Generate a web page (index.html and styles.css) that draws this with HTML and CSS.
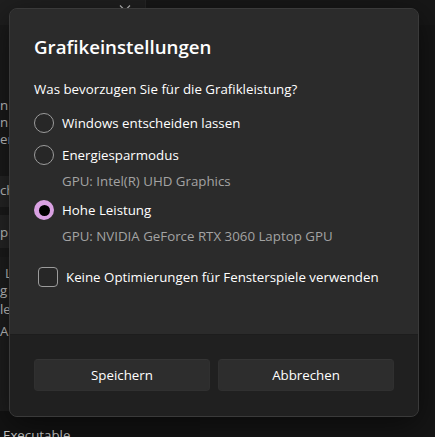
FILE: index.html
```html
<!DOCTYPE html>
<html lang="de">
<head>
<meta charset="utf-8">
<title>Grafikeinstellungen</title>
<link rel="stylesheet" href="styles.css">
</head>
<body>
<div class="bg">
  <div class="top-row">
    <div class="top-card">
      <svg class="chev" width="12" height="8" viewBox="0 0 12 8"><path d="M1 1.5 L6 6.5 L11 1.5" fill="none" stroke="#bdbdbd" stroke-width="1.2"/></svg>
    </div>
    <div class="top-rest"></div>
  </div>
  <div class="side">
    <div class="blk blk1">
      <div class="frag">n</div>
      <div class="frag">n</div>
      <div class="frag">er</div>
    </div>
    <div class="blk blk2"><div class="frag">ch</div></div>
    <div class="blk blk3"><div class="frag">pp</div></div>
    <div class="blk blk4">
      <div class="frag f4">L</div>
      <div class="frag">g</div>
      <div class="frag f6">le</div>
      <div class="frag f7">A</div>
    </div>
    <div class="blk blk5"><div class="exe">Executable</div></div>
  </div>

  <div class="dialog">
    <div class="content">
      <h1 class="title">Grafikeinstellungen</h1>
      <p class="question">Was bevorzugen Sie für die Grafikleistung?</p>
      <div class="options">
        <div class="radio-row"><span class="radio"></span><span class="label">Windows entscheiden lassen</span></div>
        <div class="radio-row"><span class="radio"></span><span class="label">Energiesparmodus</span></div>
        <div class="sub">GPU: Intel(R) UHD Graphics</div>
        <div class="radio-row"><span class="radio checked"><span class="dot"></span></span><span class="label">Hohe Leistung</span></div>
        <div class="sub">GPU: NVIDIA GeForce RTX 3060 Laptop GPU</div>
      </div>
      <div class="check-row"><span class="checkbox"></span><span class="label">Keine Optimierungen für Fensterspiele verwenden</span></div>
    </div>
    <div class="footer">
      <button class="btn">Speichern</button>
      <button class="btn">Abbrechen</button>
    </div>
  </div>
</div>
</body>
</html>
```
FILE: styles.css
```css
* { box-sizing: border-box; }
html, body { margin: 0; padding: 0; background: #151515; }
body {
  font-family: "Open Sans", "Noto Sans", "DejaVu Sans", sans-serif;
  font-size: 13.3px;
  color: #fff;
}
.bg {
  position: relative;
  width: 435px;
  height: 437px;
  overflow: hidden;
  background: #151515;
}
.top-row { display: flex; height: 25px; }
.top-card {
  width: 146px;
  background: #1f1f1f;
  border-right: 1px solid #262626;
  position: relative;
}
.chev { position: absolute; left: 119px; top: 4px; }
.top-rest { flex: 1; background: #171717; }
.side { width: 200px; background: #1b1b1b; }
.blk { position: relative; overflow: hidden; }
.frag {
  color: #c9c9c9;
  font-size: 13.3px;
  line-height: 17px;
  white-space: nowrap;
}
.blk1 { height: 151px; background: #1b1b1b; padding-top: 72px; }
.blk2 { height: 31px; background: #262626; padding-top: 6px; margin-bottom: 8px; }
.blk3 { height: 33px; background: #262626; padding-top: 9px; margin-bottom: 9px; }
.blk4 { height: 154px; background: #1e1e1e; padding-top: 8px; }
.f4 { padding-left: 5px; }
.f6 { margin-top: 2px; }
.f7 { margin-top: 5px; }
.blk5 { height: 30px; background: #131313; padding-top: 14px; }
.exe { color: #d0d0d0; font-size: 13.3px; line-height: 20px; padding-left: 3px; }

.dialog {
  position: absolute;
  left: 9px;
  top: 8px;
  width: 410px;
  height: 409px;
  border: 1px solid #3a3a3a;
  border-radius: 8px;
  overflow: hidden;
  display: flex;
  flex-direction: column;
  box-shadow: 0 8px 32px rgba(0, 0, 0, 0.55);
  background: #2b2b2b;
}
.content {
  flex: 1;
  background: #2b2b2b;
  padding: 24px 24px 0 24px;
}
.title {
  margin: 0;
  font-size: 18.7px;
  line-height: 28px;
  font-weight: 600;
}
.question {
  margin: 18px 0 0 0;
  font-size: 13.3px;
  line-height: 20px;
}
.options { margin-top: 8px; display: flex; flex-direction: column; }
.radio-row {
  height: 32px;
  display: flex;
  align-items: center;
  gap: 8px;
}
.radio {
  width: 20px;
  height: 20px;
  border-radius: 50%;
  border: 1px solid #9c9c9c;
  background: #272727;
  display: flex;
  align-items: center;
  justify-content: center;
  flex: none;
}
.radio.checked { border: none; background: #d9a1e2; }
.dot { width: 11px; height: 11px; border-radius: 50%; background: #000; }
.label { line-height: 20px; white-space: nowrap; }
.sub {
  padding-left: 28px;
  color: #a3a3a3;
  line-height: 20px;
  margin-bottom: 3px;
  white-space: nowrap;
}
.sub:last-child { margin-bottom: 0; }
.check-row {
  margin-top: 15px;
  height: 32px;
  display: flex;
  align-items: center;
  gap: 8px;
  padding-left: 4px;
}
.checkbox {
  width: 20px;
  height: 20px;
  border-radius: 4px;
  border: 1px solid #9c9c9c;
  background: #272727;
  flex: none;
}
.footer {
  height: 82px;
  background: #202020;
  border-top: 1px solid #1d1d1d;
  padding: 24px;
  display: flex;
  gap: 8px;
}
.btn {
  flex: 1;
  height: 32px;
  border: 1px solid #303030;
  border-top-color: #353535;
  border-radius: 4px;
  background: #2d2d2d;
  color: #fff;
  font-family: inherit;
  font-size: 13.3px;
  padding: 0;
}
```
